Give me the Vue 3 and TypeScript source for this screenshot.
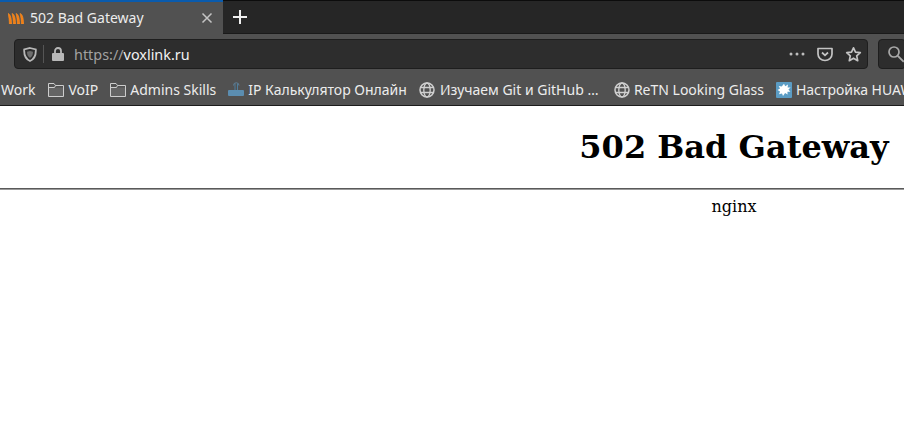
<template>
  <div class="window">
    <div class="tabstrip">
      <div class="tab">
        <svg class="favicon" width="16" height="11" viewBox="0 0 16 11" aria-hidden="true">
          <path
            v-for="x in [0, 4, 8, 12]"
            :key="x"
            :d="`M${x} 0.500c1.800 .2 3.400 2.800 3.600 10.500h-2.200c-.1-4-.5-7.500-1.400-10.500z`"
            fill="#f57c10"
            stroke="#ff9326"
            stroke-width="0.600"
          />
        </svg>
        <span class="tab-title">502 Bad Gateway</span>
        <svg class="tab-close" width="12" height="12" viewBox="0 0 12 12" aria-hidden="true">
          <path d="M1.500 1.500l9 9M10.500 1.500l-9 9" stroke="#c4c4c4" stroke-width="1.500" />
        </svg>
      </div>
      <div class="tab-rest">
        <svg class="new-tab" width="16" height="16" viewBox="0 0 16 16" aria-hidden="true">
          <path d="M8 1v14M1 8h14" stroke="#f0f0f0" stroke-width="2" />
        </svg>
      </div>
    </div>

    <div class="navbar">
      <div class="urlbar">
        <svg class="shield" width="14" height="15" viewBox="0 0 14 15" aria-hidden="true">
          <path d="M7 1l5.800 1.400c.3 5.400-1.300 9.600-5.800 11.600C2.500 12 .9 7.800 1.200 2.400z" fill="none" stroke="#b8b8b8" stroke-width="1.800" />
          <path d="M7 4l3 .8c0 3-.8 4.900-3 6.200C4.800 9.700 4 7.800 4 4.800z" fill="#6e6e6e" />
        </svg>
        <span class="url-sep"></span>
        <svg class="lock" width="12" height="14" viewBox="0 0 12 14" aria-hidden="true">
          <path d="M3 6V4a3 3 0 0 1 6 0v2" fill="none" stroke="#b8b8b8" stroke-width="1.800" />
          <rect x="0" y="6" width="12" height="8" rx="1" fill="#b8b8b8" />
        </svg>
        <span class="url"><span class="url-scheme">https://</span>voxlink.ru</span>
        <span class="url-actions">
          <svg width="16" height="4" viewBox="0 0 16 4" aria-hidden="true">
            <circle cx="2" cy="2" r="1.500" fill="#bdbdbd" />
            <circle cx="8" cy="2" r="1.500" fill="#bdbdbd" />
            <circle cx="14" cy="2" r="1.500" fill="#bdbdbd" />
          </svg>
          <svg width="16" height="16" viewBox="0 0 16 16" aria-hidden="true">
            <path d="M1 2.500h14v5.500a7 6.500 0 0 1-14 0z" fill="none" stroke="#c4c4c4" stroke-width="1.700" stroke-linejoin="round" />
            <path d="M5 6.500l3 2.800 3-2.800" fill="none" stroke="#c4c4c4" stroke-width="1.800" />
          </svg>
          <svg width="17" height="17" viewBox="0 0 17 17" aria-hidden="true">
            <path d="M8.500 1.800l2 4.400 4.800.5-3.600 3.200 1 4.800-4.200-2.500-4.200 2.500 1-4.800-3.600-3.200 4.800-.5z" fill="none" stroke="#c4c4c4" stroke-width="1.700" stroke-linejoin="round" />
          </svg>
        </span>
      </div>
      <div class="searchbar">
        <svg width="18" height="18" viewBox="0 0 18 18" aria-hidden="true">
          <circle cx="7" cy="7" r="5" fill="none" stroke="#a8a8a8" stroke-width="1.700" />
          <path d="M10.800 10.800l6 6" stroke="#a8a8a8" stroke-width="1.900" />
        </svg>
      </div>
    </div>

    <div class="bookmarks">
      <div v-for="item in bookmarks" :key="item.label" class="bookmark" :class="{ capped: item.capped }">
        <svg v-if="item.icon === 'folder'" width="16" height="15" viewBox="0 0 16 15" aria-hidden="true">
          <path d="M.500 5.500h15v9H.500z" fill="#646464" />
          <path d="M.500 14.500V1.500h5.500l1.500 2h8v11z M.500 5.500h6l1-2" fill="none" stroke="#cdcdcd" stroke-width="1" />
        </svg>
        <svg v-else-if="item.icon === 'router'" width="16" height="15" viewBox="0 0 16 15" aria-hidden="true">
          <rect x="0" y="8" width="16" height="6" rx="1" fill="#5b8db0" />
          <path d="M7 8V1.500M9.500 8V1.500" stroke="#4f7d9c" stroke-width="1" />
          <path d="M5.500 3.500a2.500 2.500 0 0 1 5.500 0" fill="none" stroke="#5f7f95" stroke-width="1" />
        </svg>
        <svg v-else-if="item.icon === 'globe'" width="16" height="16" viewBox="0 0 16 16" aria-hidden="true">
          <circle cx="8" cy="8" r="7" fill="none" stroke="#d0d0d0" stroke-width="1.500" />
          <ellipse cx="8" cy="8" rx="3.200" ry="7" fill="none" stroke="#d0d0d0" stroke-width="1.300" />
          <path d="M1.500 5.500h13M1.500 10.500h13" stroke="#d0d0d0" stroke-width="1.300" />
        </svg>
        <svg v-else-if="item.icon === 'huawei'" width="16" height="16" viewBox="0 0 16 16" aria-hidden="true">
          <rect width="16" height="16" rx="1" fill="#5b9cc4" />
          <path d="M8 1.800l1.200 2.500 2.800-1.700-.4 3 3-.2-2.200 2.200 2 2.100-3 0 .2 2.900-2.500-1.600L7 14 6 11.500l-3 .8 1-2.800-2.500-1.400 2.500-1.500-1.300-2.700 3 .6z" fill="#fff" />
        </svg>
        <span class="bookmark-label">{{ item.label }}</span>
      </div>
    </div>

    <div class="page">
      <h1>502 Bad Gateway</h1>
      <hr />
      <p>nginx</p>
    </div>
  </div>
</template>

<script setup lang="ts">
interface Bookmark {
  label: string;
  icon?: 'folder' | 'router' | 'globe' | 'huawei';
  capped?: boolean;
}

const bookmarks: Bookmark[] = [
  { label: 'Work' },
  { label: 'VoIP', icon: 'folder' },
  { label: 'Admins Skills', icon: 'folder' },
  { label: 'IP Калькулятор Онлайн', icon: 'router' },
  { label: 'Изучаем Git и GitHub …', icon: 'globe', capped: true },
  { label: 'ReTN Looking Glass', icon: 'globe' },
  { label: 'Настройка HUAWEI', icon: 'huawei' },
];
</script>

<style>
html,
body {
  margin: 0;
  overflow: hidden;
  background: #fff;
}
</style>

<style scoped>
.window {
  width: 904px;
  height: 428px;
  overflow: hidden;
  font-family: "Noto Sans", "Open Sans", sans-serif;
}

.tabstrip {
  height: 34px;
  display: flex;
  align-items: stretch;
  background: #262626;
}

.tab {
  width: 223px;
  box-sizing: border-box;
  display: flex;
  align-items: center;
  padding: 0 10px 0 8px;
  background: #515151;
  border-top: 2px solid #0a5bad;
  color: #ececec;
}

.tab-rest {
  flex: 1;
  display: flex;
  align-items: center;
  border-top: 1px solid #0c0c0c;
  border-bottom: 1px solid #1a1a1a;
}

.favicon {
  flex: none;
}

.tab-title {
  margin-left: 6px;
  margin-bottom: 2px;
  font-size: 14px;
  flex: 1;
}

.new-tab {
  margin-left: 9px;
}

.navbar {
  height: 35px;
  box-sizing: border-box;
  display: flex;
  gap: 10px;
  padding: 5px 0 0 14px;
  background: #515151;
}

.urlbar,
.searchbar {
  display: flex;
  align-items: center;
  height: 30px;
  box-sizing: border-box;
  background: #2d2d2d;
  border: 1px solid #1e1e1e;
  border-radius: 4px;
}

.urlbar {
  width: 854px;
  flex: none;
}

.shield {
  margin-left: 8px;
}

.url-sep {
  width: 1px;
  height: 18px;
  margin-left: 6px;
  background: #555;
}

.lock {
  margin-left: 8px;
}

.url {
  margin-left: 10px;
  font-size: 14.4px;
  color: #f2f2f2;
}

.url-scheme {
  color: #a2a2a2;
}

.url-actions {
  margin-left: auto;
  margin-right: 5px;
  display: flex;
  align-items: center;
  gap: 12px;
}

.searchbar {
  flex: 1;
  padding-left: 8px;
}

.bookmarks {
  height: 37px;
  box-sizing: border-box;
  display: flex;
  align-items: center;
  gap: 12px;
  padding: 5px 0 0 1px;
  background: #515151;
  border-bottom: 1px solid #1c1c1c;
  white-space: nowrap;
  color: #ececec;
  font-size: 14px;
}

.bookmark {
  display: flex;
  align-items: center;
  gap: 4px;
  flex: none;
}

.bookmark:first-child {
  margin-right: 1px;
}

.capped {
  width: 183px;
  gap: 5px;
}

.page {
  width: 1468px;
  color: #000;
  text-align: center;
  font-family: "DejaVu Serif", serif;
}

h1 {
  margin: 22px 0 21.88px;
  font-size: 32px;
  font-weight: 700;
}

hr {
  margin: 8px 0 7px;
  height: 2px;
  box-sizing: border-box;
  border: 0;
  border-top: 1px solid #5a5a5a;
  border-bottom: 1px solid #9a9a9a;
}

p {
  margin: 0;
  font-size: 16px;
}
</style>
